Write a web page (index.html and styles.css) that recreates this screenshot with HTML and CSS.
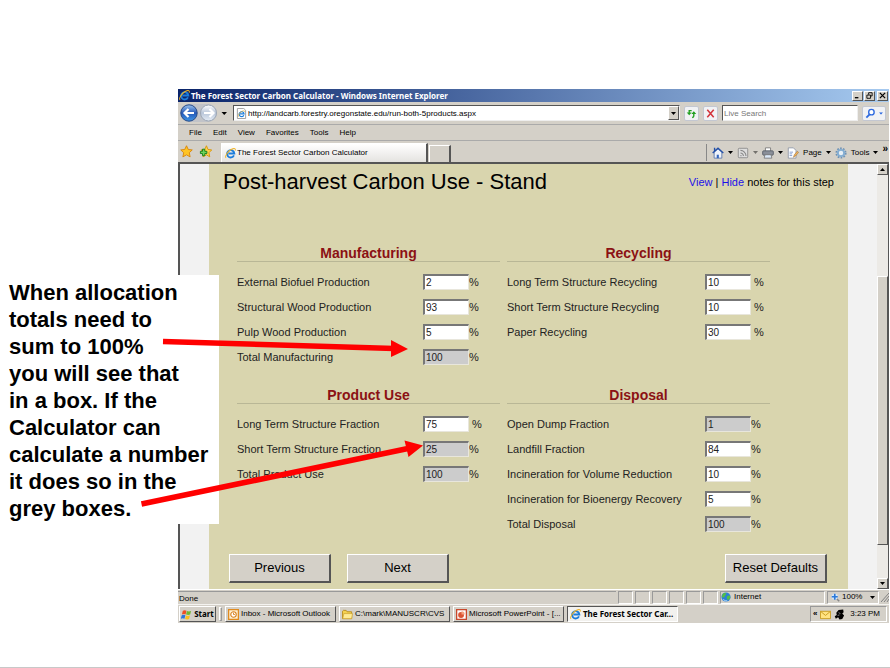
FILE: index.html
```html
<!DOCTYPE html>
<html lang="en">
<head>
<meta charset="utf-8">
<title>The Forest Sector Carbon Calculator</title>
<link rel="stylesheet" href="styles.css">
</head>
<body>
<svg class="defs" width="0" height="0" aria-hidden="true">
  <symbol id="ie" viewBox="0 0 12 12">
    <path d="M9.8 8.1A4 4 0 1 1 10.2 6H3.6" fill="none" stroke="#1c7ddb" stroke-width="2"/>
    <path d="M1.2 10.8C-.6 9.500 3 3.200 7.200 1.300c3-1.400 4.600-.8 3.900 1.500" fill="none" stroke="#f0b323" stroke-width="1.100"/>
  </symbol>
  <symbol id="caret" viewBox="0 0 5 3"><path d="M0 0h5L2.500 3z"/></symbol>
</svg>
<main class="slide">
  <section class="window">
    <header class="titlebar">
      <svg class="icon" viewBox="0 0 12 12"><use href="#ie"/></svg>
      <h1 class="caption">The Forest Sector Carbon Calculator - Windows Internet Explorer</h1>
      <button class="winbtn" aria-label="Minimize"><svg viewBox="0 0 8 8"><path d="M1 6.500h4" stroke="#000" stroke-width="1.500"/></svg></button>
      <button class="winbtn" aria-label="Restore"><svg viewBox="0 0 8 8"><path d="M3 3V.8h4v3.700H5.500M1 3.500h4.200v3.700H1z" fill="none" stroke="#000"/></svg></button>
      <button class="winbtn close" aria-label="Close"><svg viewBox="0 0 8 8"><path d="M1 1l6 6M7 1L1 7" stroke="#000" stroke-width="1.400"/></svg></button>
    </header>

    <div class="addressbar">
      <svg class="nav" viewBox="0 0 50 20">
        <defs>
          <linearGradient id="blue" x2="0" y2="1"><stop stop-color="#9cc4ee"/><stop offset=".5" stop-color="#2458b8"/><stop offset="1" stop-color="#3d96e6"/></linearGradient>
          <linearGradient id="pale" x2="0" y2="1"><stop stop-color="#fff"/><stop offset=".5" stop-color="#b9c6d9"/><stop offset="1" stop-color="#e6edf6"/></linearGradient>
        </defs>
        <path d="M10 1h19a9 9 0 0 1 0 18H10a9 9 0 0 1 0-18z" fill="#c1c3c8"/>
        <circle cx="10" cy="10" r="8.200" fill="url(#blue)" stroke="#284b87"/>
        <circle cx="29.500" cy="10" r="8" fill="url(#pale)" stroke="#9ca6b4"/>
        <path d="M15 10H6M9.500 6L5.500 10l4 4" fill="none" stroke="#fff" stroke-width="2.200"/>
        <path d="M25 10h9M30.500 6l4 4-4 4" fill="none" stroke="#fff" stroke-width="2.200"/>
        <path d="M42.500 9h5.500l-2.750 3z"/>
      </svg>
      <div class="field url">
        <svg class="icon page" viewBox="0 0 12 12"><path d="M1.500.5h7l2 2v9h-9z" fill="#fff" stroke="#999"/><use href="#ie" x="2" y="2.500" width="8" height="8"/></svg>
        <input class="text" type="text" aria-label="Address" value="http://landcarb.forestry.oregonstate.edu/run-both-5products.aspx">
        <button class="drop" aria-label="Address list"><svg class="caret" viewBox="0 0 5 3"><use href="#caret"/></svg></button>
      </div>
      <button class="tool" aria-label="Refresh"><svg viewBox="0 0 12 12"><path d="M6.200 2.800H3.500V6M8.500 5v3.700c0 1-.7 1.600-1.800 1.600" fill="none" stroke="#21a021" stroke-width="1.500"/><path d="M.8 4.800h5.400L3.500 8zM5.800 6.500h5.400L8.500 3.500z" fill="#21a021"/></svg></button>
      <button class="tool" aria-label="Stop"><svg viewBox="0 0 12 12"><path d="M2.500 2l7 8M9.500 2l-7 8" stroke="#d3343c" stroke-width="1.700"/></svg></button>
      <div class="field search"><input class="text" type="search" aria-label="Search" placeholder="Live Search"></div>
      <button class="tool find" aria-label="Search options"><svg viewBox="0 0 12 12"><circle cx="7" cy="4.500" r="3" fill="#fff" stroke="#2f6be0" stroke-width="1.500"/><path d="M5 7L1.500 10.500" stroke="#2f6be0" stroke-width="2"/></svg><svg class="caret blue" viewBox="0 0 5 3"><use href="#caret"/></svg></button>
    </div>

    <nav class="menubar">
      <a href="#">File</a><a href="#">Edit</a><a href="#">View</a><a href="#">Favorites</a><a href="#">Tools</a><a href="#">Help</a>
    </nav>

    <div class="tabbar">
      <div class="favs">
        <svg viewBox="0 0 14 14"><path d="M7 .8l1.900 4 4.300.5-3.200 3 .9 4.500L7 10.600l-3.900 2.200.9-4.500-3.200-3 4.300-.5z" fill="#ffc423" stroke="#d8860c"/></svg>
        <svg viewBox="0 0 14 14"><path d="M8 .8l1.700 4 4 .5-3 3 .9 4.500L8 10.600l-3.700 2.200.9-4.500-3-3 4-.5z" fill="#ffd24c" stroke="#d8960c"/><path d="M3.800 4.500v2.300H1.500v2.400h2.300v2.300h2.400V9.200h2.300V6.800H6.200V4.500z" fill="#6fd35c" stroke="#15801a"/></svg>
      </div>
      <button class="tab"><svg class="icon" viewBox="0 0 12 12"><use href="#ie"/></svg>The Forest Sector Carbon Calculator</button>
      <button class="newtab" aria-label="New tab"></button>
      <div class="commands">
        <svg class="cmd" viewBox="0 0 14 14"><path d="M2.500 6v7h9V6L7 2z" fill="#eef3fb" stroke="#5875a8"/><path d="M.8 7L7 1.500 13.200 7M3 1v4" fill="none" stroke="#2450a8" stroke-width="1.600"/><path d="M5.500 13V9H8v4" fill="#3566bd"/></svg>
        <svg class="caret" viewBox="0 0 5 3"><use href="#caret"/></svg>
        <svg class="cmd" viewBox="0 0 14 14"><rect x="1.500" y="1.500" width="11" height="11" rx="1" fill="#ddd" stroke="#888"/><path d="M4 7a3.500 3.500 0 0 1 3.500 3.500M4 4a6.500 6.500 0 0 1 6.500 6.500M4 10h1.200" fill="none" stroke="#888" stroke-width="1.300"/></svg>
        <svg class="caret dim" viewBox="0 0 5 3"><use href="#caret"/></svg>
        <svg class="cmd" viewBox="0 0 14 14"><path d="M4 5V1h6v4" fill="#fff" stroke="#777"/><rect x=".8" y="4.500" width="12.400" height="5" rx="1" fill="#8a8f99" stroke="#555b66"/><path d="M3.500 9h7l1 4h-9z" fill="#dbe8f8" stroke="#777"/></svg>
        <svg class="caret" viewBox="0 0 5 3"><use href="#caret"/></svg>
        <svg class="cmd" viewBox="0 0 14 14"><path d="M1.500 1h6l3 3v9h-9z" fill="#fff" stroke="#8c95a5"/><path d="M3 6h4M3 8h3M3 10h3" stroke="#7795d0"/><path d="M7.500 12l1-3 3.500-4 1.500 1.200L10 10.500z" fill="#f1b35b" stroke="#9b6b33" stroke-width=".6"/></svg>
        <span>Page</span>
        <svg class="caret" viewBox="0 0 5 3"><use href="#caret"/></svg>
        <svg class="cmd" viewBox="0 0 14 14"><circle cx="7" cy="7" r="5.500" fill="none" stroke="#6f92b5" stroke-width="2" stroke-dasharray="2 1.450"/><circle cx="7" cy="7" r="3.700" fill="#e7eff6" stroke="#83add2" stroke-width="2.200"/></svg>
        <span>Tools</span>
        <svg class="caret" viewBox="0 0 5 3"><use href="#caret"/></svg>
        <b class="more">»</b>
      </div>
    </div>

    <div class="viewport">
      <form class="page-body">
        <div class="page-head">
          <h2>Post-harvest Carbon Use - Stand</h2>
          <p><a href="#">View</a> | <a href="#">Hide</a> notes for this step</p>
        </div>
        <div class="groups">
          <fieldset class="group">
            <legend>Manufacturing</legend>
            <div class="row"><label for="m1">External Biofuel Production</label><input id="m1" value="2"><span>%</span></div>
            <div class="row"><label for="m2">Structural Wood Production</label><input id="m2" value="93"><span>%</span></div>
            <div class="row"><label for="m3">Pulp Wood Production</label><input id="m3" value="5"><span>%</span></div>
            <div class="row"><label for="m4">Total Manufacturing</label><input id="m4" value="100" readonly><span>%</span></div>
          </fieldset>
          <fieldset class="group wide">
            <legend>Recycling</legend>
            <div class="row spaced"><label for="r1">Long Term Structure Recycling</label><input id="r1" value="10"><span>%</span></div>
            <div class="row spaced"><label for="r2">Short Term Structure Recycling</label><input id="r2" value="10"><span>%</span></div>
            <div class="row spaced"><label for="r3">Paper Recycling</label><input id="r3" value="30"><span>%</span></div>
          </fieldset>
          <fieldset class="group">
            <legend>Product Use</legend>
            <div class="row spaced"><label for="p1">Long Term Structure Fraction</label><input id="p1" value="75"><span>%</span></div>
            <div class="row"><label for="p2">Short Term Structure Fraction</label><input id="p2" value="25" readonly><span>%</span></div>
            <div class="row"><label for="p3">Total Product Use</label><input id="p3" value="100" readonly><span>%</span></div>
          </fieldset>
          <fieldset class="group wide">
            <legend>Disposal</legend>
            <div class="row"><label for="d1">Open Dump Fraction</label><input id="d1" value="1" readonly><span>%</span></div>
            <div class="row"><label for="d2">Landfill Fraction</label><input id="d2" value="84"><span>%</span></div>
            <div class="row"><label for="d3">Incineration for Volume Reduction</label><input id="d3" value="10"><span>%</span></div>
            <div class="row"><label for="d4">Incineration for Bioenergy Recovery</label><input id="d4" value="5"><span>%</span></div>
            <div class="row"><label for="d5">Total Disposal</label><input id="d5" value="100" readonly><span>%</span></div>
          </fieldset>
        </div>
        <div class="actions">
          <button type="button">Previous</button>
          <button type="button">Next</button>
          <button type="button" class="reset">Reset Defaults</button>
        </div>
      </form>
      <div class="scrollbar">
        <button class="arrow" aria-label="Scroll up"><svg class="caret up" viewBox="0 0 5 3"><use href="#caret"/></svg></button>
        <div class="track"><div class="thumb"></div></div>
        <button class="arrow" aria-label="Scroll down"><svg class="caret" viewBox="0 0 5 3"><use href="#caret"/></svg></button>
      </div>
    </div>

    <footer class="statusbar">
      <span class="done">Done</span>
      <i class="pane"></i><i class="pane"></i><i class="pane"></i><i class="pane"></i><i class="pane"></i><i class="pane"></i>
      <span class="pane zone"><svg viewBox="0 0 12 12"><circle cx="6" cy="6" r="5.500" fill="#2b7fd8"/><path d="M2 2.500C4 .5 6 1 6.500 2L5 4.500 3.500 7 1 6zM7 5l3.500-1 .8 3L8.500 10 7 8z" fill="#52bd48"/><path d="M2.500 9q2.500 2 5 1.500" stroke="#bfe3fb" fill="none"/></svg>Internet</span>
      <span class="pane zoom"><svg viewBox="0 0 12 12"><path d="M7 7l4 4" stroke="#888" stroke-width="2"/><circle cx="5" cy="5" r="4" fill="#d5eafe"/><path d="M5 1v8M1 5h8" stroke="#2c79d8" stroke-width="2.200"/></svg>100%<svg class="caret" viewBox="0 0 5 3"><use href="#caret"/></svg></span>
      <svg class="grip" viewBox="0 0 8 10"><path d="M0 10L8 1M3 10l5-6M6 10l2-3" stroke="#808080"/></svg>
    </footer>

    <footer class="taskbar">
      <button class="start"><svg viewBox="0 0 12 12"><path d="M2 2q2-1.500 4 0L5 6Q3 5 1 6z" fill="#ef4e23"/><path d="M6.500 2.200q2 1 4.500 0L10 6q-2 1-4.500 0z" fill="#70b830"/><path d="M.8 6.700q2-1 4 0l-1 4q-2-1-4 0z" fill="#2c74dc"/><path d="M5.400 7q2 1 4.400 0l-1 4q-2 1-4.400 0z" fill="#fbc01e"/></svg>Start</button>
      <i class="handle"></i>
      <button class="task"><svg viewBox="0 0 12 12"><rect x=".7" y=".7" width="10.600" height="10.600" fill="#fff3d8" stroke="#e08a1e" stroke-width="1.400"/><circle cx="6" cy="6" r="3" fill="#fff" stroke="#d9801c" stroke-width="1.200"/><path d="M6 4v2h1.500" fill="none" stroke="#d9801c"/></svg>Inbox - Microsoft Outlook</button>
      <button class="task"><svg viewBox="0 0 12 12"><path d="M.5 10.500v-8l1-1h3l1 1.500h5v7.500z" fill="#f5d24f" stroke="#b98c1d"/><path d="M2 5h9.500l-1 5.500H.8z" fill="#ffeb94" stroke="#c89b25" stroke-width=".7"/></svg>C:\mark\MANUSCR\CVS</button>
      <button class="task"><svg viewBox="0 0 12 12"><rect x=".7" y=".7" width="10.600" height="10.600" fill="#fff" stroke="#c8472b" stroke-width="1.400"/><circle cx="5.500" cy="6.500" r="3.200" fill="#db5534"/><path d="M6 6V2.500A3.500 3.500 0 0 1 9.500 6z" fill="#f4a180"/></svg>Microsoft PowerPoint - [...</button>
      <button class="task active"><svg viewBox="0 0 12 12"><use href="#ie"/></svg>The Forest Sector Car...</button>
      <div class="tray"><b>«</b>
        <svg viewBox="0 0 12 12"><path d="M.5 2.500h11v8H.5z" fill="#ffe382" stroke="#c79a1e"/><path d="M.5 2.500L6 7l5.500-4.500" fill="none" stroke="#c79a1e"/></svg>
        <svg viewBox="0 0 12 12"><path d="M5 1l5-.5.500 3L9 5l2 2-2 4-3 .5L4.500 9 2 10.500.8 8 3 6.500 2.500 4z"/><path d="M5 4l2 1M4 7l2-.5" stroke="#ccc" stroke-width=".7"/></svg>
        <time>3:23 PM</time></div>
    </footer>
  </section>

  <aside class="note">When allocation<br>totals need to<br>sum to 100%<br>you will see that<br>in a box. If the<br>Calculator can<br>calculate a number<br>it does so in the<br>grey boxes.</aside>
  <svg class="pointers" viewBox="0 0 890 668" aria-hidden="true">
    <path d="M163 341.500L394 348.500M141.500 504L408 448.500" stroke="#f00" stroke-width="5.500"/>
    <path d="M391 340l17 9-17 8zM404.500 440.500l18.500 5-14.500 11.500z" fill="#f00"/>
  </svg>
</main>
</body>
</html>
```
FILE: styles.css
```css
* { box-sizing: border-box; }
body { margin: 0; background: #fff; font-family: "Liberation Sans", Arial, sans-serif; color: #111; }
svg { display: block; flex: none; }
button, input { font: inherit; color: inherit; margin: 0; padding: 0; border-radius: 0; }
button { display: flex; align-items: center; justify-content: center; background: #d4d0c8; border: 1px solid; border-color: #fff #555 #555 #fff; }
a { color: inherit; text-decoration: none; }
.defs { position: absolute; }

.slide { position: relative; min-height: 100vh; padding: 89px 1px 0 178px; border-bottom: 1px solid #c8c8c8; }
.window { display: flex; flex-direction: column; background: #d4d0c8; font-size: 8px; line-height: 10px; white-space: nowrap; color: #000; }
.icon { width: 11px; height: 11px; }
.caret { width: 5px; height: 3px; }
.caret.dim { opacity: .45; }
.caret.blue { fill: #2f6be0; }
.caret.up { transform: rotate(180deg); }

.titlebar { display: flex; align-items: center; gap: 1px; height: 13px; padding: 0 1px; background: linear-gradient(90deg, #0a246a, #a6caf0); }
.caption, .start, .taskbar .active { font-family: "Noto Sans", Tahoma, sans-serif; font-size: 8px; font-weight: bold; }
.caption { flex: 1; margin: 0; color: #fff; }
.winbtn { width: 11px; height: 10px; }
.winbtn svg { width: 7px; height: 7px; }
.winbtn.close { margin-left: 1px; }

.addressbar { display: flex; align-items: center; gap: 4px; height: 22px; padding: 0 3px 0 1px; }
.nav { width: 50px; height: 20px; }
.field { display: flex; align-items: center; height: 16px; background: #fff; border: 1px solid; border-color: #555 #eee #eee #555; }
.url { flex: 1; gap: 1px; padding-left: 2px; }
.text { flex: 1; min-width: 0; height: 12px; border: 0; outline: 0; background: none; appearance: none; }
.text::placeholder { color: #777; opacity: 1; }
.drop { width: 11px; height: 14px; }
.search { width: 136px; padding-left: 1px; }
.tool { width: 15px; height: 15px; background: #f1f2f5; border: 1px solid #c3c7d1; border-radius: 2px; }
.tool svg { width: 11px; height: 11px; }
.find { width: 24px; gap: 3px; }
.tool .caret { width: 4px; height: 3px; }

.menubar { display: flex; align-items: center; gap: 11px; height: 17px; padding-left: 11px; border-top: 1px solid #aaa; border-bottom: 1px solid #aaa; }

.tabbar { display: flex; align-items: flex-end; height: 21px; padding: 0 1px 0 2px; }
.favs { display: flex; gap: 6px; width: 41px; align-self: center; }
.favs svg { width: 13px; height: 13px; }
.tab { width: 207px; height: 19px; justify-content: flex-start; gap: 1px; padding-left: 3px; background: linear-gradient(#fff, #e4e3e0); border-width: 1px 2px 0 1px; }
.newtab { width: 22px; height: 17px; margin-left: 1px; border-width: 1px 2px 0 1px; }
.commands { display: flex; align-items: center; gap: 4px; height: 17px; margin: 0 0 1px auto; padding-left: 5px; border-left: 1px solid #888; }
.commands .cmd { width: 12px; height: 12px; }
.more { font-size: 10px; align-self: flex-start; }

.viewport { display: flex; padding-left: 29px; background: #f2f2f2; border: 1px solid #555; border-width: 2px 1px 0 2px; }
.page-body { flex: 1; display: flex; flex-direction: column; min-height: 425px; padding: 6px 14px; background: #d9d5ae; font-size: 11px; }
.page-head { display: flex; justify-content: space-between; height: 74px; }
.page-head h2 { margin: 0; font-size: 22px; line-height: 24px; font-weight: normal; }
.page-head p { margin: 0; line-height: 24px; }
.page-head a { color: #1c10e8; }

.groups { display: grid; grid-template-columns: 263px 263px; column-gap: 7px; row-gap: 17px; padding-left: 14px; }
.group { min-width: 0; margin: 0; padding: 0; border: 0; }
.group legend { width: 100%; height: 18px; padding: 0; margin-bottom: 7px; border-bottom: 1px solid #b9b796; text-align: center; font-size: 14px; line-height: 18px; font-weight: bold; color: #8b1114; }
.row { display: flex; align-items: center; height: 25px; color: #222; }
.row label { width: 186px; }
.wide .row label { width: 198px; }
.row input { width: 46px; height: 16px; padding: 0 1px; font-size: 10px; background: #fff; border: 2px solid; border-color: #777 #e8e6dc #e8e6dc #777; border-width: 2px 1px 1px 2px; }
.row input:read-only { background: #ccc; }
.row.spaced span { margin-left: 3px; }

.actions { display: flex; gap: 16px; margin: auto 0 0 6px; padding-right: 7px; font-size: 13px; }
.actions button { width: 102px; height: 29px; border-width: 1px 2px 2px 1px; }
.actions .reset { margin-left: auto; }

.scrollbar { display: flex; flex-direction: column; width: 11px; margin-left: 29px; background: #eceae6; }
.arrow { height: 11px; }
.track { flex: 1; display: flex; flex-direction: column; padding: 101px 0 33px; }
.thumb { flex: 1; background: #d4d0c8; border: 1px solid; border-color: #fff #555 #555 #fff; }

.statusbar { display: flex; align-items: center; gap: 2px; height: 15px; border-top: 1px solid #fff; }
.done { flex: 1; height: 13px; line-height: 13px; padding-left: 1px; border-top: 1px solid #999; }
.pane { display: flex; align-items: center; width: 15px; height: 13px; border: 1px solid; border-color: #999 #fff #fff #999; }
.zone { width: 105px; gap: 3px; }
.zone svg { width: 10px; height: 10px; }
.zoom { width: 52px; gap: 2px; padding: 0 3px; }
.zoom svg { width: 9px; height: 9px; }
.zoom .caret { width: 5px; height: 3px; margin-left: auto; }
.grip { width: 8px; height: 10px; }

.taskbar { display: flex; align-items: center; gap: 3px; height: 19px; padding: 0 2px 0 1px; border-top: 1px solid #f4f3f0; }
.taskbar svg { width: 11px; height: 11px; }
.taskbar button { height: 16px; gap: 2px; }
.start { width: 37px; }
.handle { width: 3px; height: 14px; border: 1px solid; border-color: #fff #999 #999 #fff; }
.taskbar .task { width: 111px; padding-left: 2px; justify-content: flex-start; }
.taskbar .active { background: #f2f1ee; border-color: #555 #fff #fff #555; }
.tray { display: flex; align-items: center; gap: 3px; width: 77px; height: 16px; margin-left: auto; padding: 0 6px 0 2px; border: 1px solid; border-color: #999 #fff #fff #999; }
.tray time { margin-left: auto; }

.note { position: absolute; left: 0; top: 275px; width: 219px; padding: 4px 0 2px 9px; background: #fff; color: #000; font-size: 22px; line-height: 27px; font-weight: bold; white-space: nowrap; }
.pointers { position: absolute; left: 0; top: 0; width: 890px; height: 668px; pointer-events: none; }
```
